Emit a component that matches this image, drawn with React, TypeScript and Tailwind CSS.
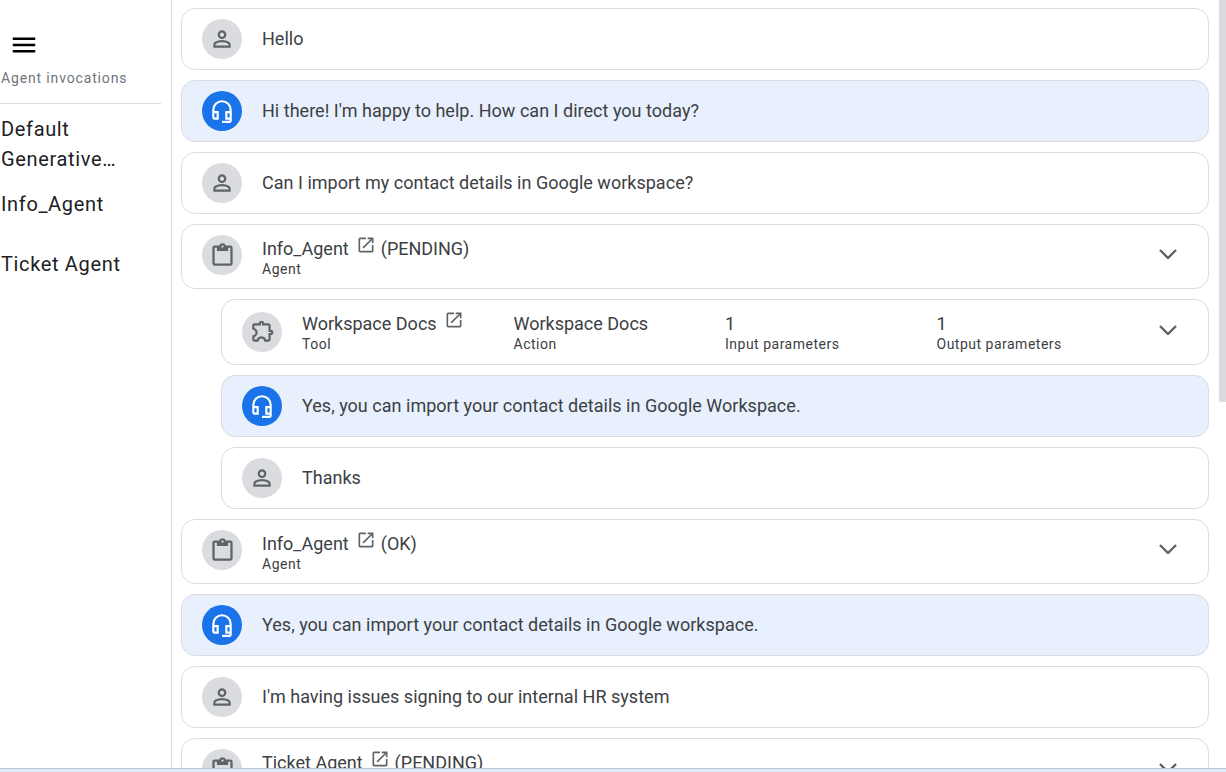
import React from "react";
import { MdMenu, MdOpenInNew } from "react-icons/md";

const paths: Record<string, string> = {
  user: "M480-480q-66 0-113-47t-47-113q0-66 47-113t113-47q66 0 113 47t47 113q0 66-47 113t-113 47ZM160-160v-112q0-34 17.5-62.5T224-378q62-31 126-46.5T480-440q66 0 130 15.5T736-378q29 15 46.5 43.5T800-272v112H160Zm80-80h480v-32q0-11-5.5-20T700-306q-54-27-109-40.5T480-360q-56 0-111 13.5T260-306q-9 5-14.5 14t-5.5 20v32Zm240-320q33 0 56.5-23.5T560-640q0-33-23.5-56.5T480-720q-33 0-56.5 23.5T400-640q0 33 23.5 56.5T480-560Zm0-80Zm0 400Z",
  bot: "M480-40v-80h280v-40H600v-320h160v-40q0-116-82-198t-198-82q-116 0-198 82t-82 198v40h160v320H200q-33 0-56.5-23.5T120-240v-280q0-149 105.5-254.5T480-880q149 0 254.5 105.5T840-520v400q0 33-23.5 56.5T760-40H480ZM200-240h80v-160h-80v160Zm480 0h80v-160h-80v160ZM200-400h80-80Zm480 0h80-80Z",
  agent: "M200-120q-33 0-56.5-23.5T120-200v-560q0-33 23.5-56.5T200-840h167q11-35 43-57.5t70-22.5q40 0 71.5 22.5T594-840h166q33 0 56.5 23.5T840-760v560q0 33-23.5 56.5T760-120H200Zm0-80h560v-560h-80v120H280v-120h-80v560Zm280-560q17 0 28.5-11.5T520-800q0-17-11.5-28.5T480-840q-17 0-28.5 11.5T440-800q0 17 11.5 28.5T480-760Z",
  tool: "M352-120H200q-33 0-56.5-23.5T120-200v-152q48 0 84-30.5t36-77.5q0-47-36-77.5T120-568v-152q0-33 23.5-56.5T200-800h160q0-42 29-71t71-29q42 0 71 29t29 71h160q33 0 56.5 23.5T800-720v160q42 0 71 29t29 71q0 42-29 71t-71 29v160q0 33-23.5 56.5T720-120H568q0-50-31.5-85T460-240q-45 0-76.5 35T352-120Zm-152-80h85q24-66 77-93t98-27q45 0 98 27t77 93h85v-240h80q8 0 14-6t6-14q0-8-6-14t-14-6h-80v-240H480v-80q0-8-6-14t-14-6q-8 0-14 6t-6 14v80H200v88q54 20 87 67t33 105q0 57-33 104t-87 68v88Z",
};

const sizes: Record<string, number> = { user: 26, bot: 26, agent: 27, tool: 26 };

function Avatar({ kind }: { kind: "user" | "bot" | "agent" | "tool" }) {
  const blue = kind === "bot";
  const s = sizes[kind];
  return (
    <div
      className={
        blue
          ? "w-10 h-10 rounded-full flex items-center justify-center shrink-0 bg-[#1a73e8] text-white"
          : "w-10 h-10 rounded-full flex items-center justify-center shrink-0 bg-[#dadce0] text-[#5f6368]"
      }
    >
      <svg width={s} height={s} viewBox="0 -960 960 960" fill="currentColor">
        <path d={paths[kind]} />
      </svg>
    </div>
  );
}

function Chevron({ className }: { className: string }) {
  return (
    <svg width="18" height="10" viewBox="0 0 18 10" fill="none" stroke="currentColor" strokeWidth="2.4" className={className}>
      <polyline points="1,1 9,9 17,1" />
    </svg>
  );
}

function Message({ kind, text }: { kind: "user" | "bot"; text: string }) {
  return (
    <div
      className={
        kind === "bot"
          ? "h-[62px] shrink-0 rounded-[14px] border border-[#dadce0] bg-[#e8f0fe] flex items-center pl-5 gap-5"
          : "h-[62px] shrink-0 rounded-[14px] border border-[#dadce0] bg-white flex items-center pl-5 gap-5"
      }
    >
      <Avatar kind={kind} />
      <span className="text-[18px] text-[#3c4043] leading-6 tracking-[0.02px]">{text}</span>
    </div>
  );
}

function AgentRow({ name, status }: { name: string; status: string }) {
  return (
    <div className="h-[65px] shrink-0 rounded-[14px] border border-[#dadce0] bg-white flex items-start pl-5 pr-[31px] pt-[10px] gap-5">
      <Avatar kind="agent" />
      <div className="flex-1 min-w-0 flex flex-col pt-[2px]">
        <div className="flex items-center text-[18px] text-[#3c4043] leading-6 h-6">
          <span>{name}</span>
          <MdOpenInNew size={20} className="ml-[7px] mr-[5px] -mt-2 text-[#5f6368]" />
          <span>{status}</span>
        </div>
        <span className="text-[14px] leading-[17px] tracking-[0.5px] text-[#3c4043]">Agent</span>
      </div>
      <Chevron className="shrink-0 text-[#5f6368] mt-[14px]" />
    </div>
  );
}

function Cell({ top, sub, link }: { top: string; sub: string; link?: boolean }) {
  return (
    <div className="w-[211.5px] shrink-0 flex flex-col">
      <div className="flex items-center text-[18px] text-[#3c4043] leading-6 h-6">
        <span>{top}</span>
        {link && <MdOpenInNew size={20} className="ml-[7px] -mt-2 text-[#5f6368]" />}
      </div>
      <span className="text-[14px] leading-[17px] tracking-[0.5px] text-[#3c4043]">{sub}</span>
    </div>
  );
}

function ToolRow() {
  return (
    <div className="h-[66px] shrink-0 rounded-[14px] border border-[#dadce0] bg-white flex items-center pl-5 pr-[31px] gap-5">
      <Avatar kind="tool" />
      <div className="flex-1 min-w-0 flex">
        <Cell top="Workspace Docs" sub="Tool" link />
        <Cell top="Workspace Docs" sub="Action" />
        <Cell top="1" sub="Input parameters" />
        <Cell top="1" sub="Output parameters" />
      </div>
      <Chevron className="shrink-0 text-[#5f6368] -mt-[4px]" />
    </div>
  );
}

export default function App() {
  return (
    <div className="h-[772px] w-[1226px] overflow-hidden flex flex-col bg-white font-['Roboto',sans-serif]">
      <div className="flex-1 min-h-0 flex">
        <aside className="w-[172px] shrink-0 border-r border-[#dadce0] flex flex-col pt-[31px]">
          <div className="pl-[9px] h-[28px] flex items-center">
            <MdMenu size={30} className="text-black" />
          </div>
          <div className="w-[161px] border-b border-[#dadce0] pl-[1px] pt-[9px] pb-[15px] text-[14px] leading-[20px] tracking-[0.85px] text-[#70757a]">
            Agent invocations
          </div>
          <div className="pl-[1px] pt-[10px] w-[161px] text-[20px] tracking-[0.65px] text-[#202124]">
            <div className="h-[75px] leading-[30px]">
              Default
              <br />
              Generative…
            </div>
            <div className="h-[60px] leading-[30px]">Info_Agent</div>
            <div className="h-[60px] leading-[30px]">Ticket Agent</div>
          </div>
        </aside>
        <main className="flex-1 min-w-0 overflow-hidden pl-[9px] pr-[10px] pt-2 flex flex-col gap-[10px]">
          <Message kind="user" text="Hello" />
          <Message kind="bot" text="Hi there! I'm happy to help. How can I direct you today?" />
          <Message kind="user" text="Can I import my contact details in Google workspace?" />
          <AgentRow name="Info_Agent" status="(PENDING)" />
          <div className="pl-10 shrink-0 flex flex-col gap-[10px]">
            <ToolRow />
            <Message kind="bot" text="Yes, you can import your contact details in Google Workspace." />
            <Message kind="user" text="Thanks" />
          </div>
          <AgentRow name="Info_Agent" status="(OK)" />
          <Message kind="bot" text="Yes, you can import your contact details in Google workspace." />
          <Message kind="user" text="I'm having issues signing to our internal HR system" />
          <AgentRow name="Ticket Agent" status="(PENDING)" />
        </main>
        <div className="w-[7px] shrink-0">
          <div className="h-[402px] bg-[#dadce0] rounded-bl-[2px]" />
        </div>
      </div>
      <div className="h-[4px] shrink-0 bg-[#dfe9f8] border-t border-[#b8c7e0]" />
    </div>
  );
}
